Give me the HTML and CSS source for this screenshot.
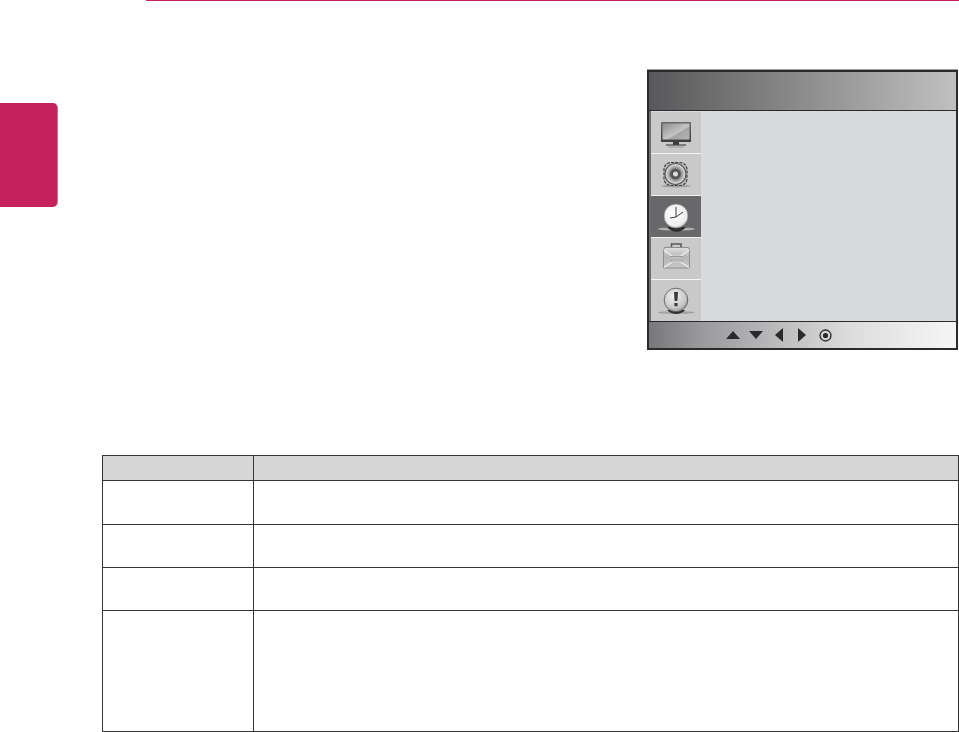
FILE: index.html
```html
<!DOCTYPE html>
<html lang="en">
<head>
<meta charset="UTF-8">
<meta name="viewport" content="width=device-width, initial-scale=1.0">
<title>Manual page</title>
<link rel="stylesheet" href="styles.css">
</head>
<body>

<div class="top-rule"></div>

<div class="top-row">
  <div class="side-tab"></div>

  <div class="osd">
    <div class="osd-header"></div>

    <div class="osd-body">
      <div class="osd-menu">
        <div class="menu-item">
          <svg width="50" height="41" viewBox="0 0 50 41">
            <defs>
              <linearGradient id="tvGlass" x1="0" y1="0" x2="1" y2="1">
                <stop offset="0" stop-color="#8e8e8e"/>
                <stop offset="0.55" stop-color="#c4c4c4"/>
                <stop offset="0.62" stop-color="#a6a6a6"/>
                <stop offset="1" stop-color="#b4b4b4"/>
              </linearGradient>
              <linearGradient id="tvFrame" x1="0" y1="0" x2="0" y2="1">
                <stop offset="0" stop-color="#6a6a6a"/>
                <stop offset="1" stop-color="#3e3e40"/>
              </linearGradient>
            </defs>
            <rect x="10" y="10" width="30" height="20" rx="0.5" fill="url(#tvFrame)"/>
            <rect x="11.5" y="11.5" width="27" height="16" fill="url(#tvGlass)"/>
            <rect x="22" y="30" width="6" height="3" fill="#3e3e40"/>
            <path d="M15 33h20" stroke="#4c4c4c" stroke-width="1.2"/>
            <path d="M17 35h16" stroke="#9a9a9a" stroke-width="1"/>
          </svg>
        </div>

        <div class="menu-item">
          <svg width="50" height="41" viewBox="0 0 50 41">
            <defs>
              <radialGradient id="speakerCone">
                <stop offset="0" stop-color="#dcdcdc"/>
                <stop offset="0.2" stop-color="#dcdcdc"/>
                <stop offset="0.28" stop-color="#4e4e4e"/>
                <stop offset="0.46" stop-color="#5a5a5a"/>
                <stop offset="0.55" stop-color="#8e8e8e"/>
                <stop offset="0.85" stop-color="#cfcfcf"/>
                <stop offset="1" stop-color="#e4e4e4"/>
              </radialGradient>
            </defs>
            <ellipse cx="25" cy="32" rx="15" ry="1.5" fill="#a0a0a0"/>
            <rect x="13" y="8.5" width="23" height="23" rx="7" fill="#bcbcbc" stroke="#3e3e3e" stroke-width="1.2" stroke-dasharray="3 1.2"/>
            <circle cx="24.5" cy="20" r="10.5" fill="url(#speakerCone)" stroke="#585858" stroke-width="1.2"/>
          </svg>
        </div>

        <div class="menu-item menu-item-active">
          <svg width="50" height="41" viewBox="0 0 50 41">
            <defs>
              <radialGradient id="clockFace" cx="0.45" cy="0.4" r="0.7">
                <stop offset="0" stop-color="#ffffff"/>
                <stop offset="0.72" stop-color="#eeeeee"/>
                <stop offset="1" stop-color="#8e8e8e"/>
              </radialGradient>
            </defs>
            <ellipse cx="25.5" cy="33" rx="18.5" ry="1.6" fill="#b0b0b0"/>
            <path d="M16 31a12 12 0 0 0 19 0z" fill="#2e2e2e"/>
            <circle cx="25" cy="20" r="12" fill="url(#clockFace)" stroke="#8a8a8a" stroke-width="0.8"/>
            <path d="M25 11v10M25 21l7-5M25 21l-6 1" fill="none" stroke="#3a3a3a" stroke-width="1"/>
          </svg>
        </div>

        <div class="menu-item">
          <svg width="50" height="41" viewBox="0 0 50 41">
            <defs>
              <linearGradient id="caseBody" x1="0" y1="0" x2="0" y2="1">
                <stop offset="0" stop-color="#e0e0e0"/>
                <stop offset="0.45" stop-color="#b6b6b6"/>
                <stop offset="1" stop-color="#c6c6c6"/>
              </linearGradient>
            </defs>
            <path d="M20.5 9V6h9.5v3" fill="none" stroke="#5a5a5a" stroke-width="1.6"/>
            <path d="M13.5 9.5h24l1 3v17.5h-26V12.5z" fill="url(#caseBody)" stroke="#8e8e8e" stroke-width="1"/>
            <path d="M13 12l9 6.5h7l9-6.5M13 29.5l9-6h7l9 6" fill="none" stroke="#ececec" stroke-width="1.3"/>
            <path d="M19 18.5h13M19 23h13" stroke="#9a9a9a" stroke-width="1"/>
          </svg>
        </div>

        <div class="menu-item">
          <svg width="50" height="41" viewBox="0 0 50 41">
            <defs>
              <radialGradient id="alertFace" cx="0.42" cy="0.35" r="0.75">
                <stop offset="0" stop-color="#f2f2f2"/>
                <stop offset="0.65" stop-color="#c8c8c8"/>
                <stop offset="1" stop-color="#7e7e7e"/>
              </radialGradient>
            </defs>
            <ellipse cx="25.5" cy="32.5" rx="18.5" ry="1.3" fill="#a0a0a0"/>
            <path d="M16 29a12 12 0 0 0 18 0z" fill="#333" transform="translate(0.2 1)"/>
            <circle cx="25" cy="20" r="11.8" fill="url(#alertFace)" stroke="#555" stroke-width="0.8"/>
            <path d="M23 12h4l-.6 9h-2.8z" fill="#3a3a3c"/>
            <rect x="23.4" y="23" width="3.2" height="3.2" fill="#3a3a3c"/>
          </svg>
        </div>
      </div>

      <div class="osd-panel"></div>
    </div>

    <div class="osd-footer">
      <svg class="key" width="14" height="8" viewBox="0 0 14 8"><path d="M7 0l7 8H0z"/></svg>
      <svg class="key" width="14" height="8" viewBox="0 0 14 8"><path d="M0 0h14L7 8z"/></svg>
      <svg class="key key-side" width="8" height="14" viewBox="0 0 8 14"><path d="M8 0v14L0 7z"/></svg>
      <svg class="key key-side" width="8" height="14" viewBox="0 0 8 14"><path d="M0 0l8 7-8 7z"/></svg>
      <svg class="key" width="13" height="13" viewBox="0 0 13 13"><circle cx="6.5" cy="6.5" r="5.5" fill="none" stroke="#2a2a2c" stroke-width="1.3"/><circle cx="6.5" cy="6.5" r="2.6"/></svg>
    </div>
  </div>
</div>

<table class="info-table">
  <thead>
    <tr class="row-head"><th class="col-name"></th><th></th></tr>
  </thead>
  <tbody>
    <tr class="row-first"><td></td><td></td></tr>
    <tr class="row-short"><td></td><td></td></tr>
    <tr class="row-short"><td></td><td></td></tr>
    <tr class="row-tall"><td></td><td></td></tr>
  </tbody>
</table>

</body>
</html>
```

FILE: styles.css
```css
html, body {
  margin: 0;
  background: white;
}
body {
  width: 959px;
  height: 732px;
  overflow: hidden;
  font-family: "Liberation Sans", Arial, sans-serif;
}
.top-rule {
  height: 1px;
  margin-left: 146px;
  background-color: #c7225c;
}
.top-row {
  display: flex;
  justify-content: space-between;
  align-items: flex-start;
  height: 454px;
}
.side-tab {
  width: 58px;
  height: 104px;
  margin-top: 102px;
  background-color: #c5225b;
  border-radius: 0 5px 5px 0;
  box-sizing: border-box;
  border-right: 1px solid #e06a93;
}
.osd {
  width: 311px;
  height: 280px;
  margin-top: 69px;
  margin-right: 1px;
  box-sizing: border-box;
  border: 2px solid #2b2a2c;
  box-shadow: 0 -1px 0 #a0a0a0;
  display: flex;
  flex-direction: column;
}
.osd-header {
  height: 38px;
  background: linear-gradient(90deg, #58585a, #c0c0c0);
  border-bottom: 1px solid #2b2a2c;
}
.osd-body {
  display: flex;
  height: 210px;
  padding: 1px 0 0 2px;
  box-sizing: border-box;
  background: linear-gradient(90deg, #6e6e70 0, #6e6e70 2px, #d9dadb 2px, #d9dadb 100%);
}
.osd-menu {
  width: 50px;
  display: flex;
  flex-direction: column;
  gap: 1px;
  background-color: #f4f4f4;
}
.menu-item {
  height: 41px;
  background-color: #c9c9c9;
}
.menu-item svg {
  display: block;
}
.menu-item-active {
  background-color: #68686a;
}
.osd-panel {
  flex: 1;
  background-color: #d9dadb;
}
.osd-footer {
  flex: 1;
  display: flex;
  align-items: center;
  gap: 9px;
  padding-left: 77px;
  border-top: 1px solid #2b2a2c;
  background: linear-gradient(90deg, #78787a, #9a9a9c 17%, #b4b4b6 37%, #dcdcdc 65%, #f4f4f4 97%);
}
.key {
  fill: #2a2a2c;
  display: block;
}
.key-side {
  margin: 0 3px;
}
.key-side + .key:not(.key-side) {
  margin-left: 1px;
}
.info-table {
  margin-left: 102px;
  width: 857px;
  height: 277px;
  border-collapse: collapse;
  table-layout: fixed;
}
.info-table th, .info-table td {
  border: 1px solid #353436;
  padding: 0;
}
.col-name {
  width: 150px;
}
.row-head {
  height: 25px;
  background-color: #d7d6d6;
}
.row-first {
  height: 44px;
}
.row-short {
  height: 43px;
}
.row-tall {
  height: 121px;
}
```
